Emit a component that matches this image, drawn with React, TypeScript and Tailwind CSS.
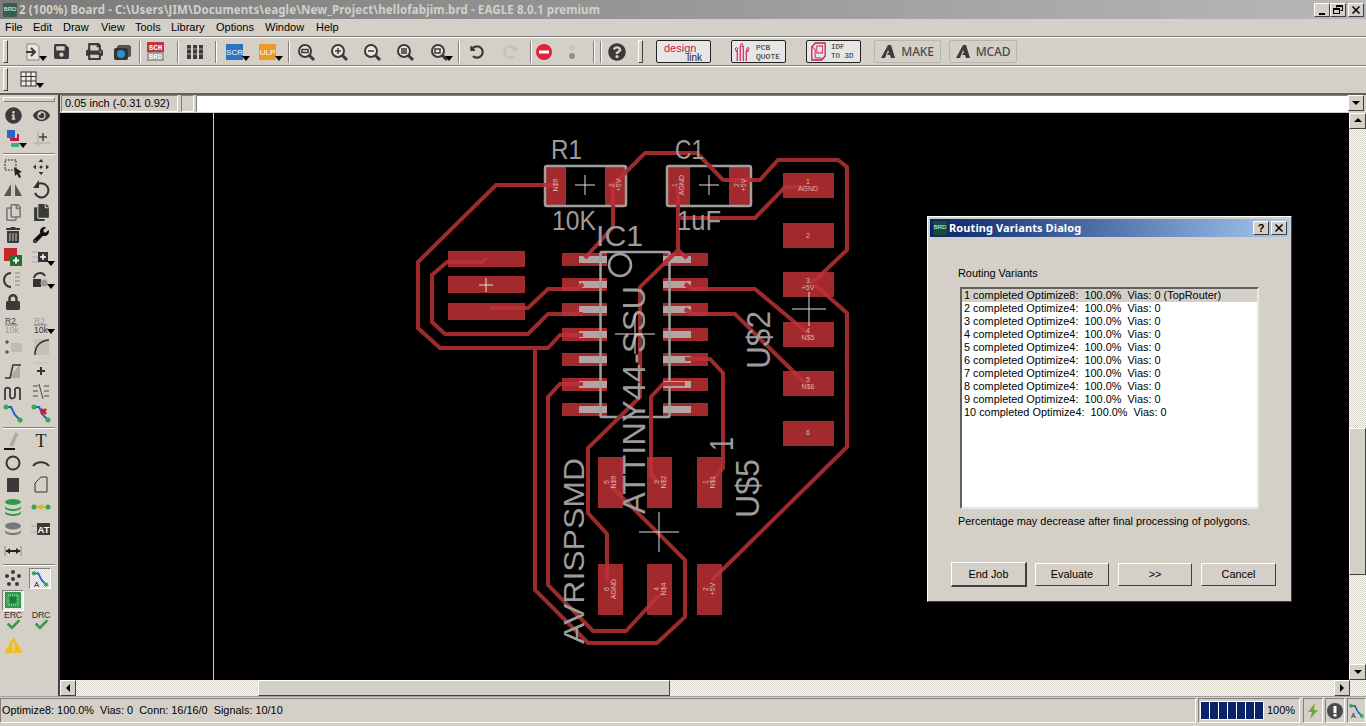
import React from 'react'
import {
  FaInfoCircle, FaEye, FaTrashAlt, FaWrench, FaLock, FaQuestionCircle, FaUndoAlt, FaRedoAlt,
  FaSave, FaPrint, FaRegCopy, FaCopy, FaExclamationTriangle, FaCheck,
} from 'react-icons/fa'

const raised = 'border border-t-white border-l-white border-r-[#404040] border-b-[#404040]'
const sunken = 'border border-t-[#808080] border-l-[#808080] border-r-white border-b-white'
const checker = 'bg-[repeating-conic-gradient(#ffffff_0_25%,#d4d0c8_0_50%)] bg-[length:2px_2px]'
const dark = '#3a3a3a'

function Drop() {
  return (
    <svg width="10" height="6" className="absolute right-[-3px] bottom-[2px]">
      <path d="M1 0h8L5 5z" fill="#000" />
    </svg>
  )
}

function Ic({ children, drop, className = '' }: { children: React.ReactNode; drop?: boolean; className?: string }) {
  return (
    <div className={'relative w-6 h-6 flex items-center justify-center shrink-0 ' + className}>
      <svg width="22" height="22" viewBox="0 0 22 22">{children}</svg>
      {drop && <Drop />}
    </div>
  )
}

function Fa({ children, className = '' }: { children: React.ReactNode; className?: string }) {
  return <div className={'w-6 h-6 flex items-center justify-center shrink-0 text-[#3a3a3a] ' + className}>{children}</div>
}

function Sep({ className = '' }: { className?: string }) {
  return <div className={'w-[2px] h-[22px] border-l border-[#808080] bg-white shrink-0 ' + className} />
}

function Grip({ className = '' }: { className?: string }) {
  return <div className={'w-[5px] h-[23px] bg-[#d4d0c8] shrink-0 ' + raised + ' ' + className} />
}

function Zoom({ mark }: { mark: string }) {
  return (
    <>
      <circle cx="10" cy="10" r="6" fill="#e8e6e0" stroke={dark} strokeWidth="2" />
      <path d="M14.5 14.5L19 19" stroke={dark} strokeWidth="3" />
      <path d={mark} stroke={dark} strokeWidth="1.5" fill="none" />
    </>
  )
}

function Toolbar() {
  return (
    <div className="h-[29px] shrink-0 flex items-center border-t border-white border-b border-b-[#808080]">
      <Grip className="ml-[3px]" />
      <Ic drop className="ml-[13px]">
        <path d="M5 3h9l3 3v13H5z" fill="#e8e6e0" stroke="#8a8a8a" />
        <path d="M4 11h8M9 7l4 4-4 4" stroke={dark} strokeWidth="2" fill="none" />
      </Ic>
      <Fa className="ml-1"><FaSave size={17} /></Fa>
      <Fa className="ml-[9px]"><FaPrint size={17} /></Fa>
      <Ic className="ml-1">
        <rect x="6" y="4" width="14" height="12" rx="2" fill="#555" />
        <rect x="3" y="7" width="14" height="12" rx="2" fill="#333" />
        <circle cx="10" cy="13" r="4" fill="#2f8fd0" />
      </Ic>
      <Sep className="ml-[5px]" />
      <Ic className="ml-[3px]">
        <rect x="2" y="1" width="17" height="10" fill="#c8323c" />
        <rect x="2" y="11" width="17" height="9" fill="#9a9a9a" />
        <text x="10.5" y="9" textAnchor="middle" fontSize="7.5" fontWeight="700" fill="#fff" fontFamily="Liberation Mono, monospace">SCH</text>
        <text x="10.5" y="18" textAnchor="middle" fontSize="7.5" fontWeight="700" fill="#fff" fontFamily="Liberation Mono, monospace">BRD</text>
      </Ic>
      <Sep className="ml-[9px]" />
      <Ic className="ml-1">
        <path d="M3 4h4v14H3zM9 4h4v14H9zM15 4h4v14h-4z" fill={dark} />
        <path d="M3 8h4M9 8h4M15 8h4M3 13h4M9 13h4M15 13h4" stroke="#aaa" />
      </Ic>
      <Sep className="ml-2" />
      <Ic drop className="ml-[7px]">
        <rect x="1" y="3" width="17" height="16" fill="#2a74c4" />
        <text x="9.5" y="14" textAnchor="middle" fontSize="8" fill="#fff" fontFamily="Liberation Sans, sans-serif">SCR</text>
      </Ic>
      <Ic drop className="ml-[9px]">
        <rect x="1" y="3" width="17" height="16" fill="#ee9a20" />
        <text x="9.5" y="14" textAnchor="middle" fontSize="8" fill="#fff" fontFamily="Liberation Sans, sans-serif">ULP</text>
      </Ic>
      <Sep className="ml-[7px]" />
      <Ic className="ml-1"><Zoom mark="M7 8.5h6v3H7z" /></Ic>
      <Ic className="ml-[9px]"><Zoom mark="M7 10h6M10 7v6" /></Ic>
      <Ic className="ml-[9px]"><Zoom mark="M7 10h6" /></Ic>
      <Ic className="ml-[9px]"><Zoom mark="M7 8h6M7 10h6M7 12h6" /></Ic>
      <Ic drop className="ml-[10px]"><Zoom mark="M7 8h5v4H7z" /></Ic>
      <Sep className="ml-[7px]" />
      <Fa className="ml-[5px]"><FaUndoAlt size={14} /></Fa>
      <Fa className="ml-[9px] text-[#c4c1b9]"><FaRedoAlt size={14} /></Fa>
      <Sep className="ml-2" />
      <Ic>
        <circle cx="11" cy="11" r="8" fill="#e0243c" />
        <rect x="6" y="9.5" width="10" height="3" fill="#fff" />
      </Ic>
      <Ic className="ml-1">
        <circle cx="11" cy="7" r="3" fill="#c8c5bd" />
        <circle cx="11" cy="15" r="3" fill="#8f8f8f" />
      </Ic>
      <Sep className="ml-[9px]" />
      <Sep className="ml-[5px]" />
      <Fa className="ml-[3px]"><FaQuestionCircle size={18} /></Fa>
      <Grip className="ml-[9px]" />
      <LogoBtn className="ml-[13px]">
        <div className="relative w-full h-full font-['Liberation_Sans',sans-serif]">
          <span className="absolute left-[7px] top-[2px] text-[11px] leading-[10px] text-[#c8184a]">design</span>
          <span className="absolute left-[30px] top-[12px] text-[10px] leading-[9px] text-[#222]">link</span>
        </div>
      </LogoBtn>
      <LogoBtn className="ml-5">
        <svg width="15" height="19" viewBox="0 0 20 19" preserveAspectRatio="none" className="ml-[3px]">
          <path d="M3 19V9M7 19V4M11 19V4M15 19V9M3 9h-2M15 9h3" stroke="#c8184a" strokeWidth="1.5" fill="none" />
          <circle cx="2" cy="7" r="1.5" fill="none" stroke="#c8184a" />
          <circle cx="9" cy="3" r="1.5" fill="none" stroke="#c8184a" />
          <circle cx="17" cy="7" r="1.5" fill="none" stroke="#c8184a" />
        </svg>
        <div className="ml-[6px] text-[8px] leading-[9px] font-['Liberation_Mono',monospace] text-[#222]">PCB<br />QUOTE</div>
      </LogoBtn>
      <LogoBtn className="ml-5">
        <svg width="15" height="19" viewBox="0 0 18 19" preserveAspectRatio="none" className="ml-[4px]">
          <path d="M5 1h12v13l-4 4H1V5z" fill="none" stroke="#c8184a" strokeWidth="1.5" />
          <rect x="7" y="4" width="7" height="7" fill="none" stroke="#c8184a" />
          <path d="M1 5l4 2v9M5 16h8" stroke="#c8184a" fill="none" />
        </svg>
        <div className="ml-[5px] text-[7.5px] leading-[9px] font-['Liberation_Mono',monospace] text-[#222]">IDF<br />TO 3D</div>
      </LogoBtn>
      <AutodeskBtn className="ml-[13px] w-[67px]" label="MAKE" />
      <AutodeskBtn className="ml-2 w-[68px]" label="MCAD" />
    </div>
  )
}

function LogoBtn({ children, className = '' }: { children: React.ReactNode; className?: string }) {
  return (
    <div className={'w-[55px] h-[23px] flex items-center rounded-[2px] border border-[#222] bg-[#e6e6e6] shrink-0 ' + className}>
      {children}
    </div>
  )
}

function AutodeskBtn({ label, className = '' }: { label: string; className?: string }) {
  return (
    <div className={'h-[23px] flex items-center justify-center gap-[6px] border border-[#b8b5ad] rounded-[2px] shrink-0 ' + className}>
      <svg width="14" height="13" viewBox="0 0 14 13">
        <path d="M0 13L7 0h3l4 13h-4l-1-3H6l2-3L7 5l-3 8z" fill="#3c3c3c" />
      </svg>
      <span className="font-['Noto_Sans',sans-serif] text-[12px] tracking-[-0.2px] text-[#4a4a4a] font-medium">{label}</span>
    </div>
  )
}

function Route({ auto }: { auto?: boolean }) {
  return (
    <>
      <path d="M4 5h5l4 8 5 5" stroke="#2a5fc0" strokeWidth="2" fill="none" />
      <circle cx="4" cy="5" r="2.5" fill="#38a84c" />
      <circle cx="18" cy="18" r="2.5" fill="#38a84c" />
      {auto && <text x="4" y="21" fontSize="9" fill="#222" fontFamily="Liberation Sans, sans-serif">A</text>}
    </>
  )
}

const hairSans = 'Liberation Sans, sans-serif'

const leftRowsA: [React.ReactNode, React.ReactNode][] = [
  [
    <Ic key="g"><rect x="3" y="4" width="11" height="10" fill="none" stroke="#333" strokeDasharray="2 1" /><path d="M12 11l8 5-3 1 2 4-2 1-2-4-2 2z" fill="#222" /></Ic>,
    <Ic key="m"><path d="M11 3l-2.5 3h5zM11 19l-2.5-3h5zM3 11l3-2.5v5zM19 11l-3-2.5v5z" fill="#333" /><circle cx="11" cy="11" r="1.5" fill="#333" /></Ic>,
  ],
  [
    <Ic key="mi"><path d="M9 5v12H2zM13 5v12h7z" fill="#555" /><path d="M11 2v18" stroke="#bbb" /></Ic>,
    <Ic key="r"><path d="M7 6a7 7 0 1 1-2 8" fill="none" stroke="#333" strokeWidth="2" /><path d="M9 1v8H3z" fill="#333" /></Ic>,
  ],
  [<Fa key="c"><FaRegCopy size={17} className="text-[#777]" /></Fa>, <Fa key="p"><FaCopy size={17} /></Fa>],
  [<Fa key="t"><FaTrashAlt size={16} /></Fa>, <Fa key="w"><FaWrench size={16} className="text-[#111]" /></Fa>],
  [
    <Ic key="a"><rect x="2" y="2" width="13" height="13" fill="#c8242c" /><rect x="8" y="9" width="12" height="11" fill="#1f6e34" /><path d="M11 14.5h6M14 11.5v6" stroke="#fff" strokeWidth="2" /></Ic>,
    <Ic key="a2" drop><path d="M2 6h8M2 11h8M2 16h8" stroke="#aaa" /><rect x="8" y="6" width="10" height="10" fill="#333" /><path d="M10 11h6M13 8v6" stroke="#fff" strokeWidth="1.5" /></Ic>,
  ],
  [
    <Ic key="re"><path d="M9 4a7 7 0 0 0 0 14" fill="none" stroke="#333" strokeWidth="2" /><path d="M13 4h5M13 8h5M13 12h5M13 16h5" stroke="#aaa" strokeWidth="2" /></Ic>,
    <Ic key="ch" drop><rect x="3" y="10" width="8" height="8" fill="#333" /><circle cx="14" cy="14" r="3.5" fill="#999" /><path d="M4 9a6 6 0 0 1 11-2" fill="none" stroke="#333" strokeWidth="2" /></Ic>,
  ],
  [<Fa key="l"><FaLock size={16} /></Fa>, <div key="e" className="w-6 h-6" />],
  [
    <Ic key="n">
      <text x="3" y="10" fontSize="8.5" fill="#444" fontFamily={hairSans}>R2</text>
      <path d="M3 11h13" stroke="#777" />
      <text x="3" y="19" fontSize="8.5" fill="#999" fontFamily={hairSans}>10k</text>
    </Ic>,
    <Ic key="v" drop>
      <text x="4" y="10" fontSize="8.5" fill="#999" fontFamily={hairSans}>R2</text>
      <path d="M4 11h13" stroke="#777" />
      <text x="4" y="19" fontSize="8.5" fill="#333" fontFamily={hairSans}>10k</text>
    </Ic>,
  ],
  [
    <Ic key="s"><rect x="9" y="7" width="11" height="9" fill="#bbb" /><path d="M3 6h4M5 4v4M3 16h4M5 14v4" stroke="#333" /></Ic>,
    <Ic key="mt"><rect x="4" y="3" width="15" height="16" fill="#c4c1b9" /><path d="M5 19c0-9 5-14 14-15" fill="none" stroke="#333" strokeWidth="1.5" /></Ic>,
  ],
  [
    <Ic key="sp"><path d="M3 19h4l11-14v14z" fill="#aaa" /><path d="M3 19h5l3-13h8" fill="none" stroke="#333" strokeWidth="1.5" /></Ic>,
    <Ic key="pl"><path d="M4 4h14" stroke="#bbb" /><path d="M7 12h8M11 8v8" stroke="#333" strokeWidth="2" /></Ic>,
  ],
]

const leftRowsB: [React.ReactNode, React.ReactNode][] = [
  [
    <Ic key="w"><path d="M3 19V8a3 3 0 0 1 5 0v7a2.5 2.5 0 0 0 5 0V8a3 3 0 0 1 5 0v11" fill="none" stroke="#333" strokeWidth="1.7" /></Ic>,
    <Ic key="li"><path d="M3 5h5M3 10h5M3 15h5M14 5h5M14 10h5M14 15h5" stroke="#777" strokeWidth="1.5" /><path d="M9 3l4 15" stroke="#444" /></Ic>,
  ],
  [
    <Ic key="r1"><Route /></Ic>,
    <Ic key="r2"><Route /><path d="M11 7l5 5M16 7l-5 5" stroke="#d01838" strokeWidth="2.5" /></Ic>,
  ],
]

const leftRowsC: [React.ReactNode, React.ReactNode][] = [
  [
    <Ic key="ln"><path d="M2 19h11" stroke="#111" strokeWidth="2" /><path d="M9 16L15 3" stroke="#aaa" strokeWidth="3.5" /></Ic>,
    <div key="t" className="w-6 h-6 flex items-center justify-center font-['Liberation_Serif',serif] text-[18px] text-[#222]">T</div>,
  ],
  [
    <Ic key="ci"><circle cx="11" cy="11" r="6.5" fill="none" stroke="#333" strokeWidth="2" /></Ic>,
    <Ic key="ar"><path d="M3 14c4-5 12-5 16 0" fill="none" stroke="#333" strokeWidth="2" /></Ic>,
  ],
  [
    <Ic key="re"><rect x="5" y="4" width="12" height="14" fill={dark} /></Ic>,
    <Ic key="po"><path d="M5 18V9l6-6h6v15z" fill="none" stroke="#333" /></Ic>,
  ],
  [
    <Ic key="st"><ellipse cx="11" cy="6" rx="8" ry="3" fill="#2f9a4c" /><path d="M3 10c1 4 15 4 16 0v2c-1 4-15 4-16 0z" fill="#2f9a4c" /><path d="M3 15c1 4 15 4 16 0v2c-1 4-15 4-16 0z" fill="#2f9a4c" /></Ic>,
    <Ic key="do"><path d="M3 11h16" stroke="#e0b040" strokeWidth="2" /><circle cx="4" cy="11" r="2.5" fill="#38a84c" /><circle cx="18" cy="11" r="2.5" fill="#38a84c" /><circle cx="11" cy="11" r="2.5" fill="#e8b030" /></Ic>,
  ],
  [
    <Ic key="gs"><ellipse cx="11" cy="8" rx="8" ry="3.5" fill="#777" /><path d="M3 12c1 4 15 4 16 0v2c-1 4-15 4-16 0z" fill="#777" /></Ic>,
    <Ic key="at"><path d="M1 8h7M1 14h7" stroke="#aaa" /><rect x="7" y="5" width="13" height="12" fill={dark} /><text x="13.5" y="15" textAnchor="middle" fontSize="9.5" fontWeight="700" fill="#fff" fontFamily={hairSans}>AT</text></Ic>,
  ],
  [
    <Ic key="di"><path d="M3 6v10M19 6v10" stroke="#888" /><path d="M4 11h14" stroke="#222" strokeWidth="2" /><path d="M4 11l4-3v6zM18 11l-4-3v6z" fill="#222" /></Ic>,
    <div key="e" className="w-6 h-6" />,
  ],
]

function LeftRow({ row, h = 'h-[22px]' }: { row: [React.ReactNode, React.ReactNode]; h?: string }) {
  return (
    <div className={h + ' flex items-center pl-[1px] gap-1'}>
      {row[0]}
      {row[1]}
    </div>
  )
}

function HRule({ className = '' }: { className?: string }) {
  return <div className={'h-[2px] mx-[3px] border-t border-[#808080] bg-white ' + className} />
}

function Check({ label }: { label: string }) {
  return (
    <div className="relative w-6 h-[22px] flex justify-center">
      <span className="text-[9px] leading-none text-[#333] font-['Liberation_Sans',sans-serif] tracking-[-0.3px]">{label}</span>
      <FaCheck size={13} className="absolute left-[6px] top-[7px] text-[#3a9a4c]" />
    </div>
  )
}

function LeftPanel() {
  return (
    <div className="w-[60px] shrink-0 flex flex-col border-r-2 border-r-[#404040]">
      <div className="h-[5px] mt-[2px] mx-[3px] bg-[#d4d0c8] border border-t-white border-l-white border-b-[#808080] border-r-[#808080]" />
      <div className="mt-[1px]">
        <div className="h-[24px] flex items-center pl-[1px] gap-1">
          <Fa><FaInfoCircle size={17} /></Fa>
          <Fa><FaEye size={17} /></Fa>
        </div>
        <div className="h-[24px] flex items-center pl-[1px] gap-1">
          <Ic drop>
            <rect x="5" y="2" width="8" height="8" fill="#2a68c0" />
            <path d="M8 10h7V6h2v7H8z" fill="#c41840" />
            <rect x="9" y="15" width="8" height="4" fill="#38b080" />
          </Ic>
          <Ic>
            <path d="M8 3v15M3 15h17" stroke="#aaa" />
            <path d="M9 9h8M13 5v8" stroke="#444" strokeWidth="1.5" />
          </Ic>
        </div>
      </div>
      <HRule className="mt-[2px]" />
      <div className="mt-[1px]">
        {leftRowsA.map((r, i) => <LeftRow key={i} row={r} h="h-[22.5px]" />)}
        {leftRowsB.map((r, i) => <LeftRow key={i} row={r} h="h-[21px]" />)}
      </div>
      <HRule className="mt-[4px]" />
      <div className="mt-[1px]">
        {leftRowsC.map((r, i) => <LeftRow key={i} row={r} />)}
      </div>
      <HRule className="mt-[2px]" />
      <div className="mt-[1px] flex flex-col">
        <div className="h-[22px] flex items-center pl-[1px] gap-1">
          <Ic>
            {[[11, 5], [5, 9], [17, 9], [11, 12], [7, 17], [15, 17]].map(([x, y]) => (
              <circle key={x * 100 + y} cx={x} cy={y} r="2" fill={dark} />
            ))}
          </Ic>
          <div className={'w-[22px] h-[21px] border border-[#808080] border-r-white border-b-white ' + checker}>
            <svg width="20" height="19" viewBox="0 0 22 22"><Route auto /></svg>
          </div>
        </div>
        <div className="h-[22px] flex items-center pl-[2px]">
          <div className={'w-[22px] h-[21px] border border-[#808080] border-r-white border-b-white flex items-center justify-center ' + checker}>
            <svg width="16" height="16" viewBox="0 0 16 16">
              <rect width="16" height="16" fill="#2f9a4c" />
              <rect x="3" y="3" width="10" height="10" fill="none" stroke="#cfe8d4" strokeDasharray="1 1" />
              <rect x="5" y="5" width="6" height="6" fill="#1f7a38" />
            </svg>
          </div>
        </div>
        <div className="h-[22px] flex items-center pl-[1px] gap-1">
          <Check label="ERC" />
          <Check label="DRC" />
        </div>
        <div className="h-[24px] flex items-center pl-[1px]">
          <Fa><FaExclamationTriangle size={17} className="text-[#f0c020]" /></Fa>
        </div>
      </div>
    </div>
  )
}

const pads: number[][] = [
  [544, 166, 22, 39], [605, 166, 21, 39], [667, 166, 23, 39], [729, 166, 22, 39],
  [783, 173, 51, 25], [783, 223, 51, 25], [783, 272, 51, 25], [783, 322, 51, 25], [783, 371, 51, 25], [783, 421, 51, 25],
  [448, 251, 77, 16], [448, 276, 77, 17], [448, 303, 77, 17],
  [598, 457, 25, 51], [647, 457, 25, 51], [697, 457, 25, 51],
  [598, 564, 25, 51], [647, 564, 25, 51], [697, 564, 25, 51],
]
const icY = [259, 284, 309, 334, 359, 384, 409]

const traces = [
  'M553 185H496L418 262V328L440 348H548L560 335H583',
  'M487 258L482 262H447L432 275V322L445 334H528L548 314H583',
  'M490 308H528L548 289H577L583 284',
  'M585 258L613 227V185L645 153H697L723 180H760L778 160H838L847 167V250L810 285',
  'M678 187V250L687 258',
  'M678 250L640 287V397L588 448V513L607 534V580',
  'M678 218H755L785 187H808',
  'M815 285L847 313V447L712 580',
  'M685 284L692 289H755L810 335',
  'M685 309L692 314H735L807 385',
  'M685 359H710L723 373V468L710 483',
  'M685 384H663L651 397V475L657 480',
  'M583 384H560L548 397V585L593 631H626L662 592',
  'M535 348V590L588 643H657L685 617V560L610 485',
]

function PadText({ x, y, a, b, rot }: { x: number; y: number; a: string; b?: string; rot?: boolean }) {
  return (
    <g transform={rot ? `rotate(-90 ${x} ${y})` : undefined} fill="#d8b4b4" fontSize="7" fontFamily={hairSans} textAnchor="middle">
      <text x={x} y={b ? y - 1 : y + 3}>{a}</text>
      {b && <text x={x} y={y + 6}>{b}</text>}
    </g>
  )
}

function Silk({ x, y, w, t, rot, size = 28 }: { x: number; y: number; w: number; t: string; rot?: boolean; size?: number }) {
  return (
    <text
      x={x} y={y} fontSize={size} fill="#9c9c9c" fontFamily={hairSans} textLength={w} lengthAdjust="spacingAndGlyphs"
      transform={rot ? `rotate(-90 ${x} ${y})` : undefined}
    >{t}</text>
  )
}

function Board() {
  const cross = (x: number, y: number, r: number) => `M${x - r} ${y}H${x + r}M${x} ${y - r}V${y + r}`
  return (
    <svg viewBox="60 113 1289 567" width="1289" height="567" className="block bg-black">
      <defs>
        <clipPath id="pads">
          {pads.map((p, i) => <rect key={i} x={p[0]} y={p[1]} width={p[2]} height={p[3]} />)}
          {icY.map(y => <rect key={'l' + y} x="562" y={y - 6} width="45" height="13" />)}
          {icY.map(y => <rect key={'r' + y} x="663" y={y - 6} width="45" height="13" />)}
        </clipPath>
      </defs>
      <path d="M213.5 113V680" stroke="#cfcfcf" />
      {pads.map((p, i) => <rect key={i} x={p[0]} y={p[1]} width={p[2]} height={p[3]} fill="#a32a2c" />)}
      {icY.map(y => (
        <g key={y}>
          <rect x="562" y={y - 6} width="45" height="13" fill="#a32a2c" />
          <rect x="663" y={y - 6} width="45" height="13" fill="#a32a2c" />
          <rect x="579" y={y - 3} width="28" height="7" fill="#b3a3a3" />
          <rect x="663" y={y - 3} width="28" height="7" fill="#b3a3a3" />
        </g>
      ))}
      <g fill="none" stroke="#a0a0a0" strokeWidth="2.5">
        <rect x="545" y="166" width="81" height="40" rx="2" />
        <rect x="667" y="166" width="84" height="40" rx="2" />
        <rect x="600.5" y="252" width="69" height="165" rx="1" />
        <circle cx="620" cy="265" r="11" />
      </g>
      <g fill="none" strokeWidth="4" strokeLinejoin="miter">
        {traces.map((d, i) => <path key={i} d={d} stroke="#9e2a2b" />)}
        <g clipPath="url(#pads)">
          {traces.map((d, i) => <path key={i} d={d} stroke="#ba3038" />)}
        </g>
      </g>
      <g>
        <Silk x={551} y={159} w={31} t="R1" />
        <Silk x={675} y={159} w={29} t="C1" />
        <Silk x={552} y={230} w={44} t="10K" />
        <Silk x={677} y={230} w={44} t="1uF" />
        <Silk x={596} y={246} w={47} t="IC1" size={30} />
        <Silk x={645} y={514} w={228} t="ATTINY44-SSU" rot size={32} />
        <Silk x={584} y={644} w={186} t="AVRISPSMD" rot size={30} />
        <Silk x={759} y={518} w={59} t="U$5" rot size={33} />
        <Silk x={770} y={369} w={58} t="U$2" rot size={33} />
        <Silk x={733} y={451} w={14} t="1" rot size={33} />
      </g>
      <path
        d={[cross(585, 185, 10), cross(709, 185, 10), cross(486, 285, 7), cross(635, 334, 20), cross(809, 309, 17), cross(659, 532, 20)].join('')}
        stroke="#e4dede" fill="none"
      />
      <PadText x={555} y={185} a="N$9" rot />
      <PadText x={615} y={185} a="2" b="+5V" rot />
      <PadText x={678} y={185} a="1" b="AGND" rot />
      <PadText x={740} y={185} a="2" b="+5V" rot />
      <PadText x={808} y={185} a="1" b="AGND" />
      <PadText x={808} y={235} a="2" />
      <PadText x={808} y={284} a="3" b="+5V" />
      <PadText x={808} y={334} a="4" b="N$5" />
      <PadText x={808} y={383} a="5" b="N$6" />
      <PadText x={808} y={432} a="6" />
      <PadText x={610} y={482} a="5" b="N$9" rot />
      <PadText x={660} y={482} a="3" b="N$2" rot />
      <PadText x={709} y={482} a="1" b="N$1" rot />
      <PadText x={610} y={589} a="6" b="AGND" rot />
      <PadText x={660} y={589} a="4" b="N$4" rot />
      <PadText x={709} y={589} a="2" b="+5V" rot />
    </svg>
  )
}

function Arrow({ dir, className = '' }: { dir: 'up' | 'down' | 'left' | 'right'; className?: string }) {
  const d = { up: 'M1 6L5 2l4 4z', down: 'M1 3l4 4 4-4z', left: 'M7 1L3 5l4 4z', right: 'M3 1l4 4-4 4z' }[dir]
  return (
    <div className={'flex items-center justify-center bg-[#d4d0c8] shrink-0 ' + raised + ' ' + className}>
      <svg width="10" height="10"><path d={d} fill="#000" /></svg>
    </div>
  )
}

const variants = [
  '1 completed Optimize8:  100.0%  Vias: 0 (TopRouter)',
  '2 completed Optimize4:  100.0%  Vias: 0',
  '3 completed Optimize4:  100.0%  Vias: 0',
  '4 completed Optimize4:  100.0%  Vias: 0',
  '5 completed Optimize4:  100.0%  Vias: 0',
  '6 completed Optimize4:  100.0%  Vias: 0',
  '7 completed Optimize4:  100.0%  Vias: 0',
  '8 completed Optimize4:  100.0%  Vias: 0',
  '9 completed Optimize4:  100.0%  Vias: 0',
  '10 completed Optimize4:  100.0%  Vias: 0',
]

function DlgBtn({ label, className = '' }: { label: string; className?: string }) {
  return (
    <button className={'h-[23px] bg-[#d4d0c8] flex items-center justify-center ' + raised + ' ' + className}>{label}</button>
  )
}

function Dialog() {
  return (
    <div className={'absolute left-[867px] top-[103px] w-[365px] h-[386px] bg-[#d4d0c8] p-[2px] flex flex-col text-[10.9px] ' + raised}>
      <div className="h-[18px] flex items-center bg-gradient-to-r from-[#0a246a] to-[#a6caf0] pl-[3px] pr-[2px]">
        <svg width="14" height="14" viewBox="0 0 14 14">
          <rect width="14" height="14" rx="1" fill="#1a4a3a" />
          <text x="7" y="8" textAnchor="middle" fontSize="6" fill="#dfe" fontFamily={hairSans}>BRD</text>
        </svg>
        <span className="ml-[2px] text-white font-bold text-[11px] font-['Noto_Sans',sans-serif] tracking-[0.1px]">Routing Variants Dialog</span>
        <div className={'ml-auto w-[16px] h-[14px] bg-[#d4d0c8] flex items-center justify-center text-black font-bold text-[11px] leading-none ' + raised}>?</div>
        <div className={'ml-[2px] w-[16px] h-[14px] bg-[#d4d0c8] flex items-center justify-center ' + raised}>
          <svg width="10" height="10"><path d="M1.5 1.5l7 7M8.5 1.5l-7 7" stroke="#000" strokeWidth="1.5" /></svg>
        </div>
      </div>
      <div className="mt-[30px] ml-[28px] leading-[13px]">Routing Variants</div>
      <div className="mt-[7px] ml-[30px] w-[299px] h-[222px] bg-white border-2 border-t-[#606060] border-l-[#606060] border-r-[#e8e6e0] border-b-[#e8e6e0]">
        {variants.map((v, i) => (
          <div key={v} className={'h-[13px] leading-[13px] pl-[2px] whitespace-pre ' + (i === 0 ? 'bg-[#d4d0c8]' : '')}>{v}</div>
        ))}
      </div>
      <div className="mt-[6px] ml-[28px] leading-[13px]">Percentage may decrease after final processing of polygons.</div>
      <div className="mt-[34px] ml-[21px] flex items-center">
        <DlgBtn label="End Job" className="w-[76px] h-[25px] border-r-2 border-b-2 border-r-[#222] border-b-[#222]" />
        <DlgBtn label="Evaluate" className="ml-[8px] w-[74px]" />
        <DlgBtn label=">>" className="ml-[9px] w-[74px]" />
        <DlgBtn label="Cancel" className="ml-[9px] w-[75px]" />
      </div>
    </div>
  )
}

export default function App() {
  return (
    <div className="w-[1366px] h-[726px] overflow-hidden bg-[#d4d0c8] text-black text-[11px] font-['Liberation_Sans',sans-serif] flex flex-col">
      <div className="h-[19px] shrink-0 flex items-center bg-gradient-to-r from-[#7a7a7a] to-[#b8b8b8] pl-[3px] pr-[2px]">
        <svg width="14" height="14" viewBox="0 0 14 14">
          <rect width="14" height="14" rx="1" fill="#3c5a4a" />
          <text x="7" y="8" textAnchor="middle" fontSize="6" fill="#dfe" fontFamily={hairSans}>BRD</text>
        </svg>
        <span className="ml-[2px] text-[#d4d0c8] font-bold text-[11.5px] tracking-[0.12px] font-['Noto_Sans',sans-serif] whitespace-nowrap">{'2 (100%) Board - C:\\Users\\JIM\\Documents\\eagle\\New_Project\\hellofabjim.brd - EAGLE 8.0.1 premium'}</span>
        <div className={'ml-auto w-[16px] h-[14px] bg-[#d4d0c8] flex items-end justify-center pb-[1px] ' + raised}>
          <div className="w-[6px] h-[2px] bg-black" />
        </div>
        <div className={'w-[16px] h-[14px] bg-[#d4d0c8] flex items-center justify-center ' + raised}>
          <svg width="10" height="10" fill="none" stroke="#000"><path d="M3.5 2.5V.5h6v5h-2" /><rect x="0.5" y="3.5" width="6" height="5" /><path d="M1 4.5h5M4 1.5h5" /></svg>
        </div>
        <div className={'ml-[2px] w-[16px] h-[14px] bg-[#d4d0c8] flex items-center justify-center ' + raised}>
          <svg width="10" height="10"><path d="M1.5 1.5l7 7M8.5 1.5l-7 7" stroke="#000" strokeWidth="1.5" /></svg>
        </div>
      </div>

      <div className="h-[18px] shrink-0 flex items-center pl-[5px] border-b border-[#808080] text-[11px]">
        <span className="w-[28px]">File</span>
        <span className="w-[30px]">Edit</span>
        <span className="w-[38px]">Draw</span>
        <span className="w-[34px]">View</span>
        <span className="w-[36px]">Tools</span>
        <span className="w-[45px]">Library</span>
        <span className="w-[49px]">Options</span>
        <span className="w-[51px]">Window</span>
        <span>Help</span>
      </div>

      <Toolbar />

      <div className="h-[29px] shrink-0 flex items-center pb-[2px] border-t border-white border-b-2 border-b-[#606060]">
        <Grip className="ml-[3px]" />
        <Ic drop className="ml-[10px]">
          <rect x="2" y="4" width="15" height="14" fill="#eee" stroke="#333" />
          <path d="M2 8.5h15M2 13h15M7 4v14M12 4v14" stroke="#333" />
        </Ic>
      </div>

      <div className="flex-1 flex min-h-0">
        <LeftPanel />
        <div className="flex-1 flex flex-col min-w-0">
          <div className="h-[18px] shrink-0 flex">
            <div className={'w-[117px] h-[17px] ml-[1px] pl-[3px] leading-[15px] text-[11px] ' + sunken}>0.05 inch (-0.31 0.92)</div>
            <div className={'w-[13px] h-[17px] ml-[3px] ' + sunken} />
            <div className={'ml-[2px] w-[1152px] h-[17px] bg-white ' + sunken} />
            <Arrow dir="down" className="w-[16px] h-[16px]" />
          </div>
          <div className="relative h-[567px] shrink-0 flex">
            <Board />
            <div className={'flex-1 flex flex-col ' + checker}>
              <Arrow dir="up" className="h-[16px]" />
              <div className="h-[299px]" />
              <div className={'h-[147px] bg-[#d4d0c8] ' + raised} />
              <div className="flex-1" />
              <Arrow dir="down" className="h-[16px]" />
            </div>
            <Dialog />
          </div>
          <div className={'h-[16px] shrink-0 flex ' + checker}>
            <Arrow dir="left" className="w-[16px]" />
            <div className="w-[182px]" />
            <div className={'w-[412px] bg-[#d4d0c8] ' + raised} />
            <div className="flex-1" />
            <Arrow dir="right" className="w-[16px] mr-[16px]" />
          </div>
        </div>
      </div>

      <div className="h-[30px] shrink-0 pt-[1px] flex items-start border-t border-[#a0a0a0]">
        <div className={'w-[1196px] h-[25px] pl-[1px] leading-[23px] text-[10.9px] whitespace-pre ' + sunken}>Optimize8: 100.0%  Vias: 0  Conn: 16/16/0  Signals: 10/10</div>
        <div className={'ml-[2px] w-[102px] h-[25px] flex items-center pl-[1px] ' + sunken}>
          <div className="w-[64px] h-[19px] flex gap-[1px] bg-white p-[1px]">
            {[0, 1, 2, 3, 4, 5, 6].map(i => <div key={i} className="flex-1 bg-[#0a246a]" />)}
          </div>
          <span className="ml-[3px]">100%</span>
        </div>
        <div className={'ml-[3px] w-[20px] h-[25px] flex items-center justify-center ' + sunken}>
          <svg width="14" height="16" viewBox="0 0 14 16"><path d="M9 0L2 9h4l-2 7 8-9H8z" fill="#6fa83a" /></svg>
        </div>
        <div className={'ml-[2px] w-[20px] h-[25px] flex items-center justify-center ' + sunken}>
          <svg width="16" height="16" viewBox="0 0 16 16">
            <circle cx="8" cy="8" r="8" fill="#4a4a4a" />
            <rect x="6.5" y="3" width="3" height="7" fill="#fff" />
            <rect x="6.5" y="11" width="3" height="2.5" fill="#fff" />
          </svg>
        </div>
        <div className={'ml-[2px] w-[19px] h-[25px] flex items-center justify-center ' + sunken}>
          <svg width="17" height="17" viewBox="0 0 22 22"><Route auto /></svg>
        </div>
      </div>
    </div>
  )
}
